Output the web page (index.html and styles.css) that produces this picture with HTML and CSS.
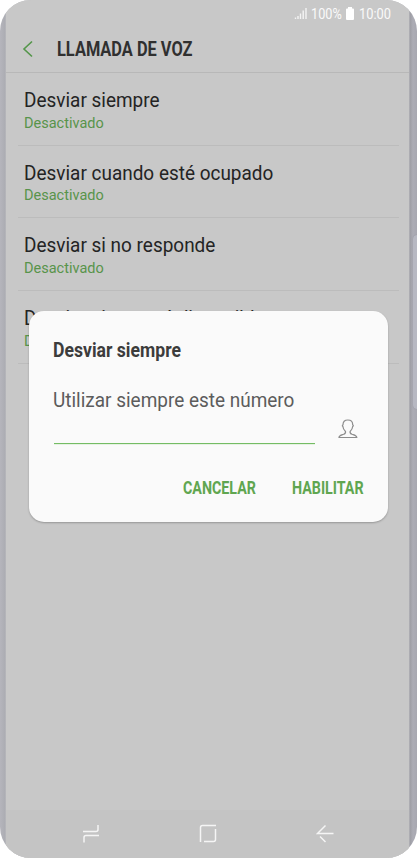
FILE: index.html
```html
<!DOCTYPE html>
<html lang="es">
<head>
<meta charset="utf-8">
<title>Llamada de voz</title>
<link rel="stylesheet" href="styles.css">
</head>
<body>
<div class="phone">
  <div class="screen">
    <div class="status">
      <svg class="signal" width="14" height="14" viewBox="0 0 14 14"><path d="M1.500 13v-1.500M4 13v-3M6.500 13V7.500M9.200 13V4.500M12 13V2" /></svg>
      <span class="cond percent">100%</span>
      <svg class="battery" width="8" height="13" viewBox="0 0 8 13"><path d="M2 0h4v1.500h1q1 0 1 1V12q0 1-1 1H1q-1 0-1-1V2.500q0-1 1-1h1z"/></svg>
      <span class="cond time">10:00</span>
    </div>
    <header class="header">
      <svg class="back" width="12" height="18" viewBox="0 0 12 18"><path d="M10 1.500 2 9l8 7.500"/></svg>
      <h1 class="cond title">LLAMADA DE VOZ</h1>
    </header>
    <ul class="list">
      <li><span class="name">Desviar siempre</span><span class="state">Desactivado</span></li>
      <li><span class="name">Desviar cuando esté ocupado</span><span class="state">Desactivado</span></li>
      <li><span class="name">Desviar si no responde</span><span class="state">Desactivado</span></li>
      <li><span class="name">Desviar si no está disponible</span><span class="state">Desactivado</span></li>
    </ul>
    <nav class="nav">
      <svg width="18" height="20" viewBox="0 0 18 20"><path d="M1 8.500h13q2 0 2-2V2M17 12.500H4q-2 0-2 2v5"/></svg>
      <svg width="18" height="20" viewBox="0 0 18 20"><path d="M1.500 19V4.500q0-2 2-2H17M5 18.500h9.500q2 0 2-2V6"/></svg>
      <svg width="18" height="20" viewBox="0 0 18 20"><path d="M9.500 2.500 1.500 10.500H17.500M4 13.500l5.500 5.500"/></svg>
    </nav>
  </div>
  <div class="edge-key"></div>
  <section class="dialog">
    <h2 class="cond dialog-title">Desviar siempre</h2>
    <p class="cond label">Utilizar siempre este número</p>
    <div class="entry">
      <div class="field"></div>
      <svg class="person" width="20" height="20" viewBox="0 0 20 20"><path d="M7.500 12.500C5.500 10.800 5 8.500 4.900 7.500 4 7.200 4.300 6 5 5.800 5 3 6.500 1 9.800 1s4.900 2 4.900 4.800c.8.2.9 1.400 0 1.700-.1 1-.6 3.300-2.600 5-.3 1.500.3 2.200 2 2.800 2.200.7 4.400.9 4.700 3.200H1c.2-2.300 2.400-2.500 4.600-3.200 1.700-.6 2.200-1.300 1.900-2.800z"/></svg>
    </div>
    <div class="actions"><span class="cond cancel">CANCELAR</span><span class="cond enable">HABILITAR</span></div>
  </section>
</div>
</body>
</html>
```
FILE: styles.css
```css
* { box-sizing: border-box; }
body { margin: 0; background: #fff; font-family: Roboto, "Liberation Sans", sans-serif; }
.phone {
  position: relative;
  width: 417px; height: 858px;
  padding: 0 7px 0 6px;
  border-radius: 31px;
  overflow: hidden;
  background: linear-gradient(90deg, #b5b5bc, #acadb3 5px, #bcbcc0 6px, #bcbcc0 409px, #9d9da4 410px, #acacb5 413px, #a7a7b0);
}
.screen { display: flex; flex-direction: column; width: 403px; height: 858px; background: #c8c8c8; }
.cond { display: block; white-space: nowrap; transform-origin: 0 50%; }
.status { display: flex; align-items: center; height: 26px; padding: 1px 0 0 288px; color: #fafafa; }
.status > * { flex: none; }
.signal { margin-top: -1px; fill: none; stroke: #f4f4f4; stroke-width: 1.400; }
.percent { width: 32px; margin-left: 3px; font-size: 15.500px; transform: scaleX(.82); }
.battery { margin-left: 3px; fill: #fff; }
.time { width: 32px; margin-left: 5px; font-size: 15.500px; transform: scaleX(.83); }
.header { display: flex; align-items: center; height: 47px; padding-left: 16px; border-bottom: 1px solid #b8b8b8; }
.back { fill: none; stroke: #54964a; stroke-width: 1.600; }
.title { margin: 2px 0 0 23px; font-size: 19.500px; line-height: 24px; color: #303030; transform: scaleX(.84); }
.list { flex: 1; margin: 0; padding: 0 10px 0 12px; list-style: none; }
.list li { height: 72.700px; padding: 15px 6px 0 6px; border-bottom: 1px solid #bcbcbc; }
.name { display: block; font-size: 19.700px; line-height: 26px; color: #242424; white-space: nowrap; transform: scaleX(.963); transform-origin: 0 50%; }
.state { display: block; width: 90px; margin-top: -.5px; font-size: 15px; line-height: 19px; color: #58944b; transform: scaleX(.968); transform-origin: 0 50%; }
.nav { display: flex; justify-content: center; gap: 99px; height: 48px; padding-top: 13px; background: #c4c4c4; }
.nav svg { fill: none; stroke: #f5f5f5; stroke-width: 1.500; }
.edge-key { position: absolute; left: 413px; top: 235px; width: 8px; height: 174px; border-radius: 4px; background: #b7b8c2; box-shadow: 0 0 1px #888894; }
.dialog {
  position: absolute; left: 29px; top: 311px; width: 359px; height: 211px;
  padding: 26px 24px 0 24.500px; border-radius: 15px; background: #fafafa;
  box-shadow: 0 1px 2px rgba(0, 0, 0, .25);
}
.dialog-title { margin: 0 0 0 -.5px; font-size: 20px; line-height: 26px; color: #3c3c3c; transform: scaleX(.88); }
.label { margin: 24px 0 0 -.5px; font-size: 20px; line-height: 26px; color: #5c5c5c; transform: scaleX(.948); }
.entry { display: flex; height: 31px; }
.field { flex: none; width: 261px; height: 32px; background: linear-gradient(#74bc64 1px, #e6f2e2 1px) 0 100% / 100% 2px no-repeat; }
.person { margin: 6px 0 0 23px; fill: none; stroke: #8c8c8c; stroke-width: 1.200; }
.actions { display: flex; margin: 33px 0 0 129px; font-size: 17.500px; font-weight: 700; line-height: 22px; color: #60a650; }
.cancel { flex: none; width: 109px; transform: scaleX(.815); }
.enable { flex: none; width: 72px; transform: scaleX(.815); }
```
